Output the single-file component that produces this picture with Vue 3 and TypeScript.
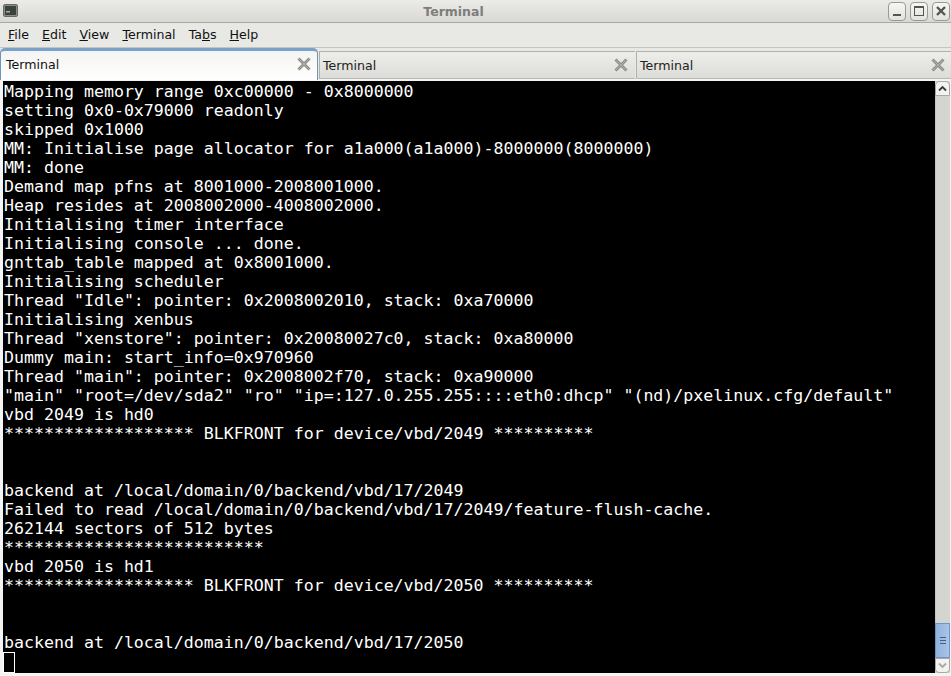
<script setup lang="ts">
const menus = [
  { pre: '', u: 'F', post: 'ile' },
  { pre: '', u: 'E', post: 'dit' },
  { pre: '', u: 'V', post: 'iew' },
  { pre: '', u: 'T', post: 'erminal' },
  { pre: 'Ta', u: 'b', post: 's' },
  { pre: '', u: 'H', post: 'elp' },
]
const tabs = [{ active: true }, { active: false }, { active: false }]
const lines: string[] = [
  'Mapping memory range 0xc00000 - 0x8000000',
  'setting 0x0-0x79000 readonly',
  'skipped 0x1000',
  'MM: Initialise page allocator for a1a000(a1a000)-8000000(8000000)',
  'MM: done',
  'Demand map pfns at 8001000-2008001000.',
  'Heap resides at 2008002000-4008002000.',
  'Initialising timer interface',
  'Initialising console ... done.',
  'gnttab_table mapped at 0x8001000.',
  'Initialising scheduler',
  'Thread "Idle": pointer: 0x2008002010, stack: 0xa70000',
  'Initialising xenbus',
  'Thread "xenstore": pointer: 0x20080027c0, stack: 0xa80000',
  'Dummy main: start_info=0x970960',
  'Thread "main": pointer: 0x2008002f70, stack: 0xa90000',
  '"main" "root=/dev/sda2" "ro" "ip=:127.0.255.255::::eth0:dhcp" "(nd)/pxelinux.cfg/default"',
  'vbd 2049 is hd0',
  '******************* BLKFRONT for device/vbd/2049 **********',
  ' ',
  ' ',
  'backend at /local/domain/0/backend/vbd/17/2049',
  'Failed to read /local/domain/0/backend/vbd/17/2049/feature-flush-cache.',
  '262144 sectors of 512 bytes',
  '**************************',
  'vbd 2050 is hd1',
  '******************* BLKFRONT for device/vbd/2050 **********',
  ' ',
  ' ',
  'backend at /local/domain/0/backend/vbd/17/2050',
]
</script>

<template>
  <div class="window">
    <header class="titlebar">
      <svg class="app-icon" width="16" height="16" viewBox="0 0 16 16">
        <rect x="0.5" y="1.5" width="14" height="12" rx="1.5" fill="#8c8c84" stroke="#6a6a64" />
        <rect x="2" y="3" width="11" height="9" fill="#3a423c" />
        <rect x="3" y="8" width="4" height="1.5" fill="#a8b0a8" />
      </svg>
      <div class="title">Terminal</div>
      <div class="win-buttons">
        <button class="win-btn">
          <svg width="12" height="12" viewBox="0 0 12 12"><rect x="2" y="9" width="8" height="2" fill="#55554f" /></svg>
        </button>
        <button class="win-btn">
          <svg width="12" height="12" viewBox="0 0 12 12"><rect x="1.5" y="1.5" width="9" height="9" fill="none" stroke="#55554f" /><rect x="1" y="1" width="10" height="2" fill="#55554f" /></svg>
        </button>
        <button class="win-btn">
          <svg width="12" height="12" viewBox="0 0 12 12"><path d="M2 2 L10 10 M10 2 L2 10" stroke="#55554f" stroke-width="2.4" /></svg>
        </button>
      </div>
    </header>

    <nav class="menubar">
      <span v-for="m in menus" :key="m.u" class="menu">{{ m.pre }}<u>{{ m.u }}</u>{{ m.post }}</span>
    </nav>

    <div class="tabs">
      <div v-for="(t, i) in tabs" :key="i" class="tab" :class="{ active: t.active }">
        <span class="tab-label">Terminal</span>
        <svg class="tab-close" width="14" height="14" viewBox="0 0 14 14">
          <path d="M1.5 1.5 L12.5 12.5 M12.5 1.5 L1.5 12.5" stroke="#8e8e88" stroke-width="3" />
          <path d="M2 2 L12 12 M12 2 L2 12" stroke="#b0b0aa" stroke-width="1" />
        </svg>
      </div>
    </div>

    <main class="body">
      <div class="term">
        <div v-for="(l, i) in lines" :key="i" class="line">{{ l }}</div>
        <div class="line"><span class="cursor"></span></div>
      </div>
      <aside class="scrollbar">
        <div class="arrow up">
          <svg width="9" height="7" viewBox="0 0 9 7"><path d="M1 5.5 L4.5 2 L8 5.5" fill="none" stroke="#3a3a36" stroke-width="1.8" /></svg>
        </div>
        <div class="track"></div>
        <div class="thumb"><i></i><i></i><i></i></div>
        <div class="arrow down">
          <svg width="9" height="7" viewBox="0 0 9 7"><path d="M1 1.5 L4.5 5 L8 1.5" fill="none" stroke="#a8a8a2" stroke-width="1.8" /></svg>
        </div>
      </aside>
    </main>
  </div>
</template>

<style>
html, body { margin: 0; background: #e8e8e5; overflow: hidden; }
</style>

<style scoped>
.window {
  width: 951px;
  height: 676px;
  display: flex;
  flex-direction: column;
  overflow: hidden;
  background: #e8e8e5;
  font-family: "DejaVu Sans", sans-serif;
  color: #111;
}
.titlebar {
  height: 23px;
  box-sizing: border-box;
  display: flex;
  align-items: center;
  padding: 0 1px 0 3px;
  background: linear-gradient(#ebebe8, #d8d8d4);
  border-bottom: 1px solid #a8a8a4;
}
.app-icon { flex: none; }
.title {
  flex: 1;
  text-align: center;
  font-size: 12.5px;
  font-weight: 700;
  color: #7e7e7a;
}
.win-buttons { display: flex; gap: 4px; }
.win-btn {
  width: 18px;
  height: 19px;
  padding: 0;
  display: flex;
  align-items: center;
  justify-content: center;
  background: linear-gradient(#f6f6f4, #e2e2de);
  border: 1px solid #9a9a94;
  border-radius: 4px;
}
.menubar {
  height: 25px;
  display: flex;
  align-items: center;
  gap: 13px;
  padding: 0 0 1px 8px;
  font-size: 12.6px;
  background: #e8e8e5;
  box-sizing: border-box;
  border-bottom: 1px solid #c4c4c0;
}
.tabs {
  height: 32px;
  display: flex;
  flex: none;
  box-sizing: border-box;
  align-items: flex-end;
  gap: 1px;
}
.tab {
  flex: 1;
  height: 28px;
  margin-bottom: 1px;
  box-sizing: border-box;
  display: flex;
  align-items: center;
  justify-content: space-between;
  padding: 0 7px 0 3px;
  font-size: 12.6px;
  color: #222;
  background: linear-gradient(#ededea, #dcdcd8);
  border-top: 1px solid #b0b0ac;
  border-bottom: 1px solid #b8b8b4;
  border-left: 1px solid #b0b0ac;
  box-shadow: 0 1px 0 #f4f4f2;
}
.tab:last-child { padding-right: 6px; }
.tab.active {
  flex: none;
  width: 318px;
  height: 32px;
  margin-bottom: 0;
  padding: 0 6px 3px 5px;
  border: 1px solid #6f94bd;
  border-top: 3px solid #7aa0cc;
  border-bottom: none;
  border-radius: 5px 5px 0 0;
  background: linear-gradient(#f4f4f2, #ffffff);
  color: #111;
  box-shadow: none;
}
.tab-close { flex: none; }
.body {
  flex: 1;
  display: flex;
  min-height: 0;
  padding: 1px 1px 3px 3px;
  background: #f4f4f2;
}
.term {
  flex: 1;
  background: #000;
  color: #fff;
  font-family: "DejaVu Sans Mono", monospace;
  font-size: 16.6px;
  line-height: 19px;
  padding: 1px 0 0 1px;
  white-space: pre;
  overflow: hidden;
}
.line { height: 19px; }
.cursor {
  display: inline-block;
  width: 10px;
  height: 19px;
  margin-left: -1px;
  border: 1px solid #fff;
  box-sizing: content-box;
  vertical-align: top;
}
.scrollbar {
  width: 15px;
  flex: none;
  display: flex;
  flex-direction: column;
  background: #d4d4d0;
}
.arrow {
  height: 15px;
  box-sizing: border-box;
  display: flex;
  align-items: center;
  justify-content: center;
  background: #f2f2f0;
  border: 1px solid #a8a8a4;
  flex: none;
}
.arrow.up { border-radius: 4px 4px 0 0; }
.arrow.down { border-radius: 0 0 4px 4px; }
.track { flex: 1; background: #d4d4d0; border-left: 1px solid #c4c4c0; }
.thumb {
  height: 35px;
  flex: none;
  box-sizing: border-box;
  display: flex;
  flex-direction: column;
  align-items: center;
  justify-content: center;
  gap: 2px;
  background: linear-gradient(90deg, #8fb2df, #a9c5e8);
  border: 1px solid #7094c4;
}
.thumb i { display: block; width: 6px; height: 1px; background: #3f5f8f; }
</style>
